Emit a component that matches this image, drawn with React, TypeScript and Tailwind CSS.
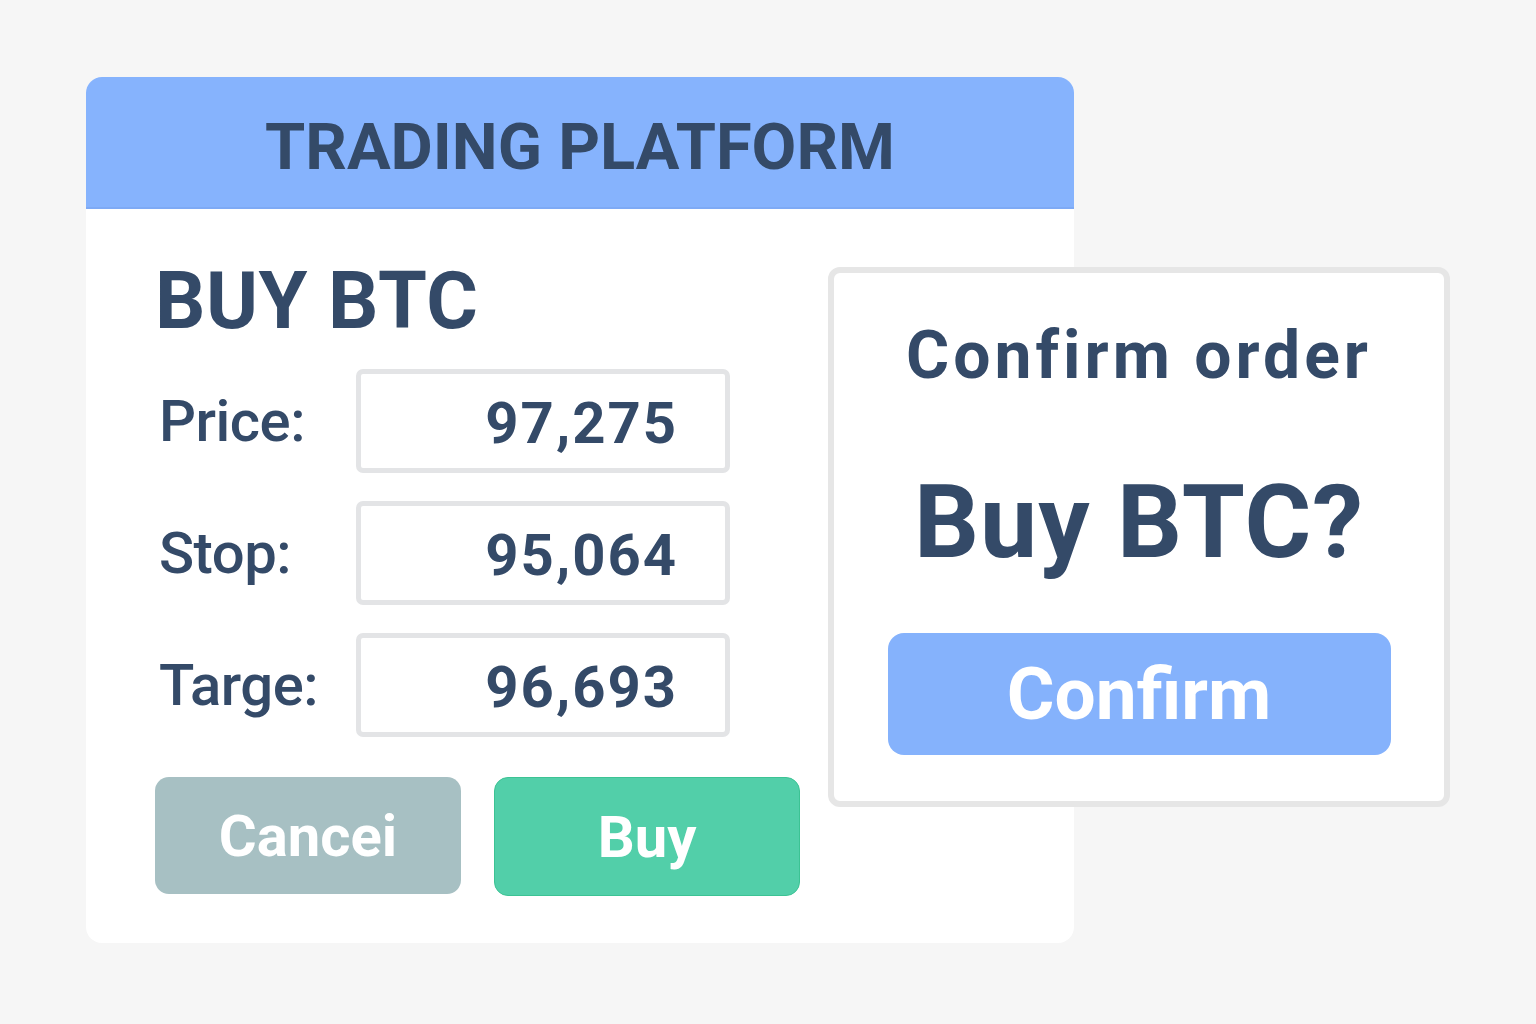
import React from "react";

const font = { fontFamily: "Roboto, 'Noto Sans', 'DejaVu Sans', sans-serif" };

function Field({ label, value }: { label: string; value: string }) {
  return (
    <div className="flex items-center">
      <div className="w-[201px] pl-[4px] text-[58px] leading-none font-medium text-[#344a68] tracking-[-0.5px]">
        {label}
      </div>
      <div className="w-[374px] h-[104px] border-[5px] border-[#e3e4e6] rounded-[7px] bg-white flex items-center justify-end pr-[47px] pt-[4px]">
        <span className="text-[58px] leading-none font-bold text-[#344a68] tracking-[2px]">{value}</span>
      </div>
    </div>
  );
}

export default function App() {
  return (
    <div className="relative w-full min-h-[1024px] bg-[#f6f6f6] pl-[86px] pt-[77px]" style={font}>
      <div className="w-[988px] h-[866px] bg-white rounded-[16px] overflow-hidden flex flex-col">
        <div className="h-[132px] bg-[#86b3fd] border-b-2 border-[#7eaaf5] flex items-center justify-center pt-[10px]">
          <span className="text-[65px] leading-none font-bold text-[#344a68]">TRADING PLATFORM</span>
        </div>
        <div className="pl-[69px] pt-[53px] flex flex-col">
          <div className="text-[79px] leading-none font-bold text-[#344a68] tracking-[0.5px]">BUY BTC</div>
          <div className="mt-[28px] flex flex-col gap-[28px]">
            <Field label="Price:" value="97,275" />
            <Field label="Stop:" value="95,064" />
            <Field label="Targe:" value="96,693" />
          </div>
          <div className="mt-[40px] flex gap-[33px]">
            <button className="w-[306px] h-[117px] rounded-[14px] bg-[#a7c0c3] flex items-center justify-center">
              <span className="text-[58px] leading-none font-bold text-white">Cancei</span>
            </button>
            <button className="w-[306px] h-[119px] rounded-[14px] bg-[#52cfa9] border border-[#3cc394] flex items-center justify-center">
              <span className="text-[58px] leading-none font-bold text-white">Buy</span>
            </button>
          </div>
        </div>
      </div>

      <div className="absolute left-[828px] top-[267px] w-[622px] h-[540px] bg-white border-[6px] border-[#e6e6e6] rounded-[12px] flex flex-col items-center">
        <div className="mt-[50px] text-[66px] leading-none font-bold text-[#344a68] tracking-[4px]">Confirm order</div>
        <div className="mt-[82px] text-[102px] leading-none font-bold text-[#344a68] tracking-[1px]">Buy BTC?</div>
        <button className="mt-[60px] w-[503px] h-[122px] rounded-[16px] bg-[#85b2fc] flex items-center justify-center">
          <span className="text-[73px] leading-none font-bold text-white">Confirm</span>
        </button>
      </div>
    </div>
  );
}
